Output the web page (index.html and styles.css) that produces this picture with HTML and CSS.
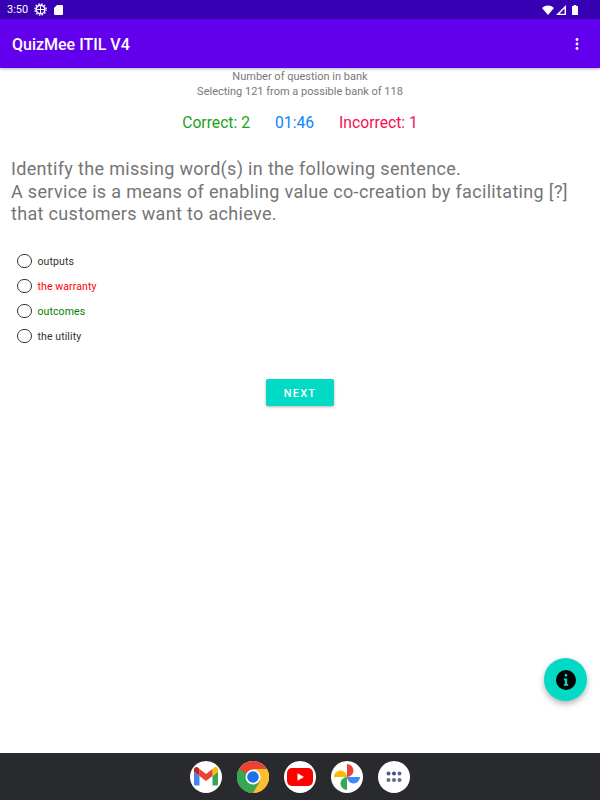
FILE: index.html
```html
<!DOCTYPE html>
<html lang="en">
<head>
<meta charset="UTF-8">
<meta name="viewport" content="width=device-width, initial-scale=1.0">
<link rel="stylesheet" href="styles.css">
<title>QuizMee ITIL V4</title>
</head>
<body>

<div id="screen">
  <div class="status-bar">
    <div class="status-left">
      <span class="clock">3:50</span>
      <svg class="gear" width="13" height="13" viewBox="0 0 13 13">
        <circle cx="6.5" cy="6.500" r="4.300" fill="none" stroke="#fff" stroke-width="1.400"/>
        <circle cx="6.500" cy="6.500" r="5.600" fill="none" stroke="#fff" stroke-width="1.400" stroke-dasharray="1.500 1.430"/>
        <path d="M6.500 3v7M3 6.500h7" stroke="#fff" stroke-width="1"/>
      </svg>
      <svg class="sd" width="9" height="10" viewBox="0 0 9 10">
        <path d="M3 0h5a1 1 0 0 1 1 1v8a1 1 0 0 1-1 1H1a1 1 0 0 1-1-1V3z" fill="#fff"/>
      </svg>
    </div>
    <div class="status-right">
      <svg width="12" height="10" viewBox="0 0 12 10"><path d="M0 2.900C3.500-.4 8.500-.4 12 2.900L6 10z" fill="#fff"/></svg>
      <svg width="10" height="10" viewBox="0 0 10 10"><path d="M10 0v10H0zM8.600 3.600 3.400 8.700h5.200z" fill="#fff" fill-rule="evenodd"/></svg>
      <svg class="battery" width="6" height="10" viewBox="0 0 6 10"><path d="M1.700 0h2.600v1h1.200a.5.5 0 0 1 .5.5V10H0V1.500a.5.5 0 0 1 .5-.5h1.200z" fill="#fff"/></svg>
    </div>
  </div>

  <div class="app-bar">
    <span class="app-title">QuizMee ITIL V4</span>
    <svg class="menu-dots" width="4" height="12" viewBox="0 0 4 12">
      <circle cx="2" cy="1.500" r="1.400" fill="#fff"/>
      <circle cx="2" cy="6" r="1.400" fill="#fff"/>
      <circle cx="2" cy="10.500" r="1.400" fill="#fff"/>
    </svg>
  </div>

  <div class="content">
    <div class="bank-info">
      <div>Number of question in bank</div>
      <div>Selecting 121 from a possible bank of 118</div>
    </div>

    <div class="scores">
      <span class="correct">Correct: 2</span>
      <span class="timer">01:46</span>
      <span class="incorrect">Incorrect: 1</span>
    </div>

    <div class="question">Identify the missing word(s) in the following sentence.<br>A service is a means of enabling value co-creation by facilitating [?] that customers want to achieve.</div>

    <div class="answers">
      <div class="answer"><span class="radio"></span><span>outputs</span></div>
      <div class="answer wrong"><span class="radio"></span><span>the warranty</span></div>
      <div class="answer right"><span class="radio"></span><span>outcomes</span></div>
      <div class="answer"><span class="radio"></span><span>the utility</span></div>
    </div>

    <div class="next-row">
      <button class="next-button">NEXT</button>
    </div>
  </div>

  <div class="fab">
    <svg width="20" height="20" viewBox="0 0 20 20">
      <path fill-rule="evenodd" d="M10 0a10 10 0 1 1 0 20a10 10 0 0 1 0-20zM8.800 4v2.600h2.400V4zM7.800 8.500v1.800h1v3.600h-1v1.800h4.400v-1.800h-1V8.500z" fill="#000"/>
    </svg>
  </div>

  <div class="dock">
    <div class="dock-icon">
      <svg width="24" height="19" viewBox="0 0 24 19">
        <path d="M1.600 18.500H5.500V9L0 4.800v12.100c0 .9.700 1.600 1.600 1.600z" fill="#4285f4"/>
        <path d="M18.500 18.500h3.900c.9 0 1.600-.7 1.600-1.600V4.800L18.500 9z" fill="#34a853"/>
        <path d="M18.500 2v7L24 4.800V2.600C24 .6 21.700-.6 20.100.6z" fill="#fbbc04"/>
        <path d="M5.500 9V2L12 6.900 18.500 2v7L12 13.900z" fill="#ea4335"/>
        <path d="M0 2.600v2.200L5.500 9V2L3.900.6C2.300-.6 0 .6 0 2.600z" fill="#c5221f"/>
      </svg>
    </div>
    <div class="dock-icon plain">
      <svg width="32" height="32" viewBox="0 0 32 32">
        <circle cx="16" cy="16" r="16" fill="#ea4335"/>
        <path d="M16 16 2.100 8A16 16 0 0 0 16 32l7-12z" fill="#34a853"/>
        <path d="M16 8h13.900A16 16 0 0 1 16 32l7-12z" fill="#fbc02d"/>
        <circle cx="16" cy="16" r="7.500" fill="#fff"/>
        <circle cx="16" cy="16" r="5.800" fill="#1a73e8"/>
      </svg>
    </div>
    <div class="dock-icon">
      <svg width="26" height="18" viewBox="0 0 26 18">
        <rect width="26" height="18" rx="5" fill="#f00"/>
        <path d="M10.500 5.200v7.600L17 9z" fill="#fff"/>
      </svg>
    </div>
    <div class="dock-icon">
      <svg width="26" height="26" viewBox="0 0 26 26">
        <path d="M0 13h13A6.500 6.500 0 0 0 0 13z" fill="#fbbc04"/>
        <path d="M13 0v13A6.500 6.500 0 0 0 13 0z" fill="#ea4335"/>
        <path d="M26 13H13a6.500 6.500 0 0 0 13 0z" fill="#4285f4"/>
        <path d="M13 26V13a6.500 6.500 0 0 0 0 13z" fill="#34a853"/>
      </svg>
    </div>
    <div class="dock-icon">
      <svg width="16" height="12" viewBox="0 0 16 12">
        <circle cx="2.500" cy="2.500" r="2" fill="#4a5a9c"/>
        <circle cx="8" cy="2.500" r="2" fill="#3c4a8c"/>
        <circle cx="13.500" cy="2.500" r="2" fill="#6a5a96"/>
        <circle cx="2.500" cy="9" r="2" fill="#646a8c"/>
        <circle cx="8" cy="9" r="2" fill="#646a8c"/>
        <circle cx="13.500" cy="9" r="2" fill="#646a8c"/>
      </svg>
    </div>
  </div>
</div>

</body>
</html>
```

FILE: styles.css
```css
body {
  margin: 0;
  font-family: Roboto, sans-serif;
  background-color: #fff;
}
#screen {
  position: relative;
  display: flex;
  flex-direction: column;
  height: 800px;
  overflow: hidden;
}
.status-bar {
  display: flex;
  justify-content: space-between;
  align-items: center;
  height: 19px;
  padding: 0 22px 0 7px;
  box-sizing: border-box;
  background-color: #3700b3;
  color: #fff;
  font-size: 11px;
}
.status-left, .status-right {
  display: flex;
  align-items: center;
}
.gear {
  margin-left: 6px;
}
.sd {
  margin-left: 7px;
}
.status-right {
  gap: 2px;
}
.battery {
  margin-left: 4px;
}
.app-bar {
  display: flex;
  justify-content: space-between;
  align-items: center;
  height: 49px;
  padding: 1px 21px 0 12px;
  box-sizing: border-box;
  background-color: #6200ee;
  box-shadow: 0 1px 3px rgba(0, 0, 0, 0.3);
}
.app-title {
  color: #fff;
  font-size: 16px;
  font-weight: 500;
}
.content {
  flex: 1;
  display: flex;
  flex-direction: column;
}
.bank-info {
  margin-top: 1px;
  text-align: center;
  color: #787878;
  font-size: 11px;
  line-height: 15px;
}
.scores {
  display: flex;
  justify-content: center;
  gap: 25px;
  margin-top: 14px;
  font-size: 15.700px;
  line-height: 20px;
}
.correct {
  color: #1aa31a;
}
.timer {
  color: #0a84ff;
}
.incorrect {
  color: #f50f50;
}
.question {
  margin-top: 25px;
  padding: 0 11px;
  color: #757575;
  font-size: 18px;
  line-height: 22.500px;
  letter-spacing: 0.33px;
}
.answers {
  margin-top: 23px;
  padding-left: 17px;
}
.answer {
  display: flex;
  align-items: center;
  gap: 6px;
  height: 25px;
  font-size: 10.500px;
  letter-spacing: 0.1px;
  color: #333;
}
.radio {
  width: 12.500px;
  height: 12.500px;
  border: 1.500px solid #333;
  border-radius: 50%;
}
.wrong {
  color: #f00;
}
.right {
  color: #008000;
}
.next-row {
  display: flex;
  justify-content: center;
  margin-top: 30px;
}
.next-button {
  width: 68px;
  height: 27px;
  padding: 2px 0 0;
  border: none;
  border-radius: 2px;
  background-color: #03dac5;
  color: #fff;
  font-family: Roboto, sans-serif;
  font-size: 11px;
  font-weight: 500;
  letter-spacing: 1.200px;
  box-shadow: 0 1px 3px rgba(0, 0, 0, 0.3);
}
.fab {
  position: absolute;
  right: 13px;
  top: 658px;
  display: flex;
  justify-content: center;
  align-items: center;
  width: 43px;
  height: 43px;
  border-radius: 50%;
  background-color: #03dac5;
  box-shadow: 0 3px 6px rgba(0, 0, 0, 0.3);
}
.dock {
  display: flex;
  justify-content: center;
  align-items: center;
  gap: 15px;
  height: 47px;
  background-color: #292a2e;
}
.dock-icon {
  display: flex;
  justify-content: center;
  align-items: center;
  width: 32px;
  height: 32px;
  border-radius: 50%;
  background-color: #fff;
}
```
